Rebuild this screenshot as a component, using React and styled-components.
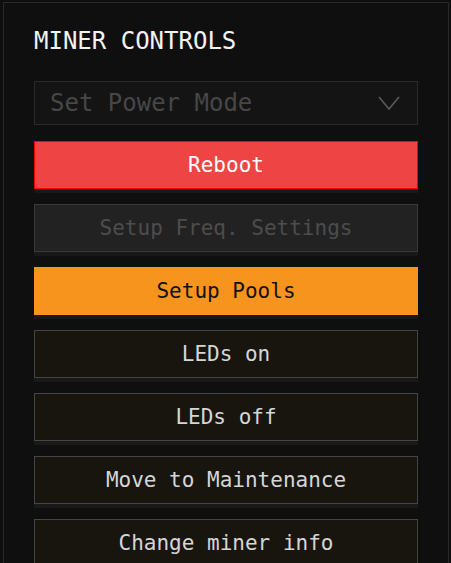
import styled, { createGlobalStyle } from 'styled-components';

const GlobalStyle = createGlobalStyle`
  html, body {
    margin: 0;
    padding: 0;
    background: #0e0e0e;
    font-family: "DejaVu Sans Mono", "Liberation Mono", monospace;
  }
`;

const variants = {
  danger: { bg: '#ef4444', border: '#ff0000', color: '#ffffff' },
  disabled: { bg: '#222222', border: '#3a3a3a', color: '#4d4d4d' },
  primary: { bg: '#f7941d', border: '#f7941d', color: '#111111' },
  default: { bg: '#18150f', border: '#454545', color: '#d6d6d6' },
};

const actions = [
  { label: 'Reboot', variant: 'danger' },
  { label: 'Setup Freq. Settings', variant: 'disabled' },
  { label: 'Setup Pools', variant: 'primary' },
  { label: 'LEDs on', variant: 'default' },
  { label: 'LEDs off', variant: 'default' },
  { label: 'Move to Maintenance', variant: 'default' },
  { label: 'Change miner info', variant: 'default' },
];

function App() {
  return (
    <>
      <GlobalStyle />
      <Panel>
        <Title>MINER CONTROLS</Title>
        <Select>
          <span>Set Power Mode</span>
          <svg width="24" height="16" viewBox="0 0 24 16" fill="none">
            <polyline points="2,2 12,14 22,2" stroke="#5a5a5a" strokeWidth="1.6" />
          </svg>
        </Select>
        <Actions>
          {actions.map((a) => (
            <Button key={a.label} $variant={a.variant} disabled={a.variant === 'disabled'}>
              {a.label}
            </Button>
          ))}
        </Actions>
      </Panel>
    </>
  );
}

export default App;

const Panel = styled.div`
  margin: 2px 3px 0;
  width: 384px;
  min-height: 600px;
  padding: 24px 30px 30px;
  border: 1px solid #2a2a2a;
  border-bottom: none;
  background: #0f0f0f;
`;

const Title = styled.h2`
  margin: 0 0 26px;
  font-size: 24px;
  line-height: 28px;
  font-weight: normal;
  color: #f2f2f2;
`;

const Select = styled.div`
  box-sizing: border-box;
  height: 44px;
  display: flex;
  align-items: center;
  justify-content: space-between;
  padding: 0 16px 0 15px;
  margin-bottom: 16px;
  border: 1px solid #2a2a2a;
  background: #141414;
  color: #474747;
  font-size: 24px;

  svg {
    display: block;
  }
`;

const Actions = styled.div`
  display: flex;
  flex-direction: column;
  gap: 15px;
`;

const Button = styled.button`
  box-sizing: border-box;
  width: 100%;
  height: 48px;
  padding: 0;
  border: 1px solid ${({ $variant }) => variants[$variant].border};
  background: ${({ $variant }) => variants[$variant].bg};
  color: ${({ $variant }) => variants[$variant].color};
  font-family: "DejaVu Sans Mono", "Liberation Mono", monospace;
  font-size: 21px;
  box-shadow: 0 4px 0 #191919;
  cursor: pointer;

  &:disabled {
    cursor: default;
  }
`;
